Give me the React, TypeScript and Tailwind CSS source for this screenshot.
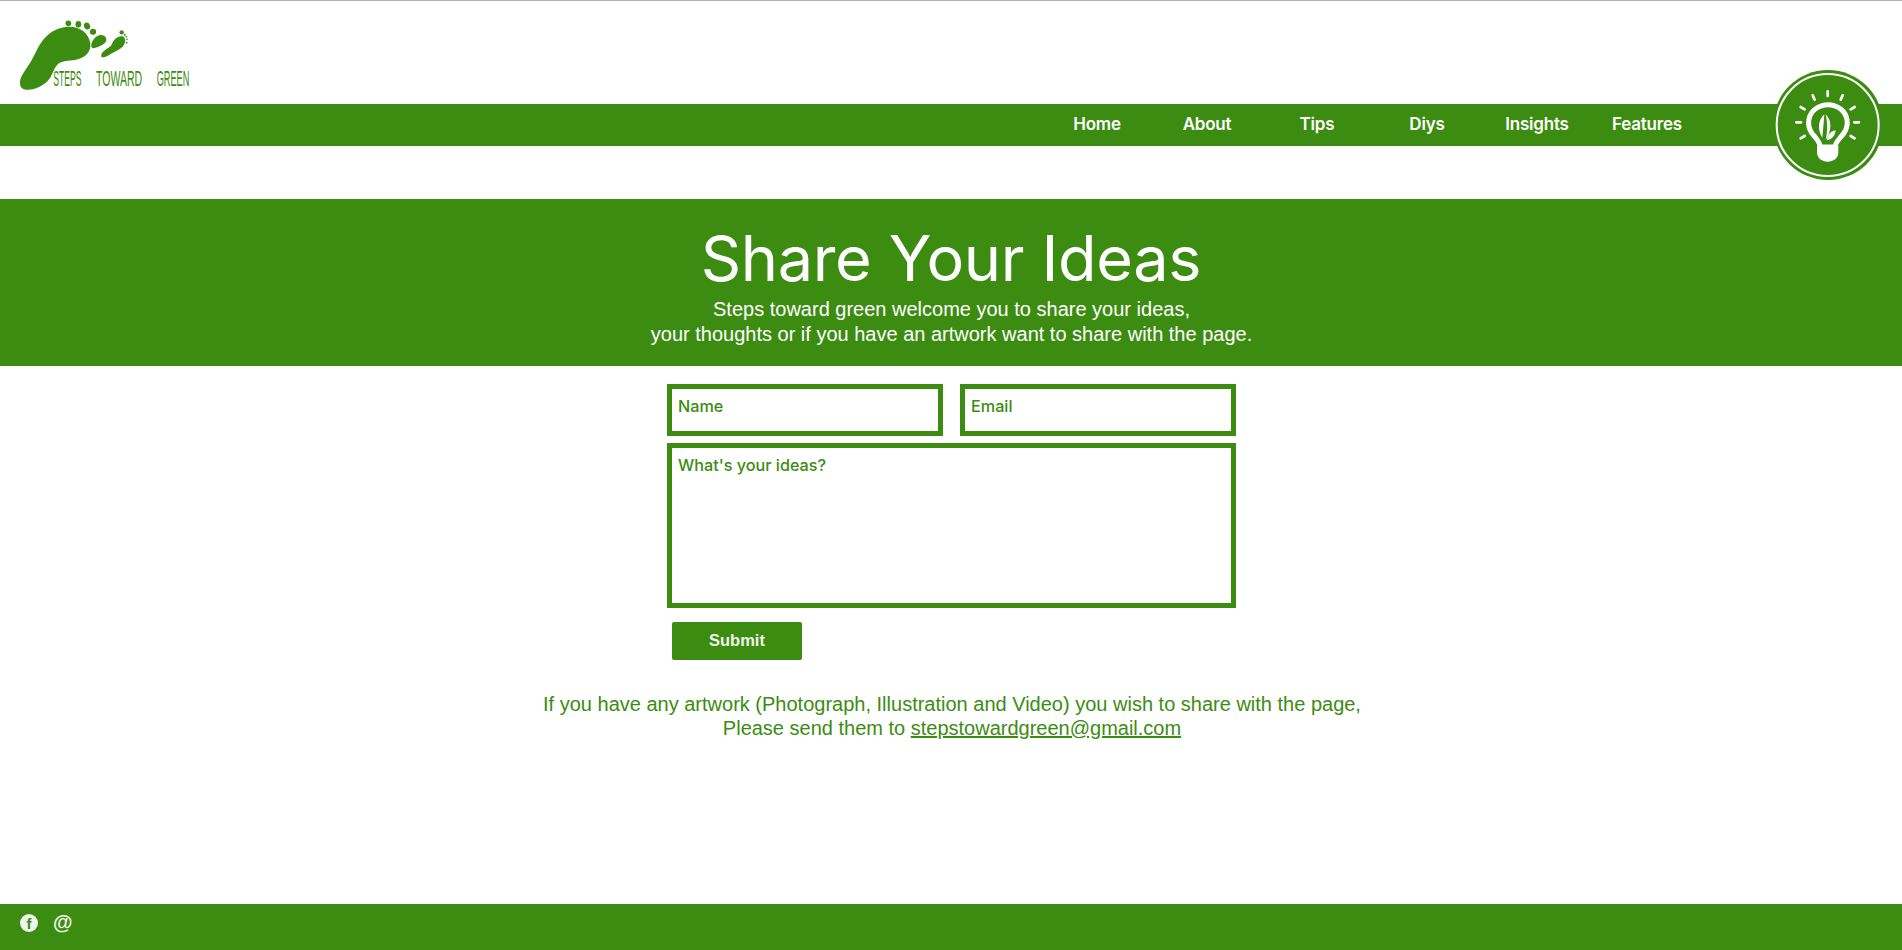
const navItems = ["Home", "About", "Tips", "Diys", "Insights", "Features"];

function Logo() {
  return (
    <svg className="block w-[220px] h-[103px]" viewBox="0 3 660 309" fill="#3c8c11">
      <path d="M60 250C58 234 72 216 88 192C104 168 114 136 134 114C150 96 176 80 208 80C242 80 266 100 271 130C274 156 256 174 228 179C204 183 182 182 172 194C160 206 158 228 142 244C124 262 98 271 78 269C66 268 61 262 60 250Z" />
      <circle cx="205" cy="70" r="8.5" />
      <ellipse cx="235" cy="73" rx="8.5" ry="10" />
      <ellipse cx="261" cy="78" rx="9" ry="10.5" transform="rotate(-25 261 78)" />
      <ellipse cx="279" cy="95" rx="9.5" ry="9" />
      <path d="M274 134C276 120 288 106 302 105C314 104 322 114 318 124C312 136 296 140 284 144C276 146 273 142 274 134Z" />
      <path d="M304 166C304 154 322 148 334 136C340 118 354 106 368 109C378 114 378 130 368 140C358 150 348 152 336 160C324 168 312 174 307 172C304 171 303 169 304 166Z" />
      <circle cx="365" cy="97" r="6.5" />
      <circle cx="374" cy="104" r="3" />
      <circle cx="379" cy="110" r="2.5" />
      <circle cx="381" cy="118" r="2.5" />
      <circle cx="380" cy="128" r="2.5" />
      <g className="font-['Liberation_Sans',sans-serif]" fontSize="68">
        <text transform="translate(160 258) scale(0.38 1)">STEPS</text>
        <text transform="translate(288 258) scale(0.464 1)">TOWARD</text>
        <text transform="translate(470 258) scale(0.405 1)">GREEN</text>
      </g>
    </svg>
  );
}

function BulbBadge() {
  return (
    <div className="absolute left-[1773px] top-[69px] w-[110px] h-[110px] rounded-full bg-[#3c8c11] flex items-center justify-center">
      <svg className="w-[110px] h-[110px]" viewBox="100 57 330 330">
        <circle cx="264" cy="222" r="153" fill="none" stroke="#fff" strokeWidth="6" />
        <g fill="none" stroke="#fff" strokeWidth="8" strokeLinecap="round">
          <path d="M264 121V135M219 133L225 146M309 133L303 146M183 168L195 175M345 168L333 175M170 214H184M344 214H358M183 262L195 255M345 262L333 255" />
          <path d="M242 288C240 270 226 260 215 244C201 222 205 190 227 174C250 157 280 157 303 174C325 192 329 222 313 246C302 262 288 270 286 288Z" strokeWidth="15" />
        </g>
        <path d="M232 284H296V304C296 320 284 332 264 332C244 332 232 320 232 304Z" fill="#fff" />
        <path d="M254 190C236 206 232 236 248 260C250 240 252 216 254 190ZM258 190C276 208 278 236 258 268C264 240 264 216 258 190Z" fill="#fff" />
        <path d="M262 268C262 252 272 242 288 238C286 254 278 264 262 268Z" fill="#fff" />
      </svg>
    </div>
  );
}

export default function App() {
  return (
    <div className="relative flex flex-col min-h-[950px] bg-white border-t border-[#b5b5b5] font-['Liberation_Sans',sans-serif] text-[#3c8c11]">
      <header>
        <Logo />
        <nav className="h-[42px] bg-[#3c8c11] flex justify-end pr-[200px]">
          {navItems.map((item) => (
            <a key={item} className="w-[110px] text-center text-white font-['Inter',sans-serif] font-semibold text-[17px] leading-[40px] tracking-[-0.2px]">
              {item}
            </a>
          ))}
        </nav>
      </header>
      <BulbBadge />

      <section className="mt-[53px] h-[167px] bg-[#3c8c11] text-white text-center">
        <h1 className="font-['Inter',sans-serif] font-normal text-[63px] leading-[76px] pt-[21px] tracking-[-0.35px]">Share Your Ideas</h1>
        <p className="text-[20px] leading-[25px] mt-[1px] pl-[1px]">
          Steps toward green welcome you to share your ideas,
          <br />
          your thoughts or if you have an artwork want to share with the page.
        </p>
      </section>

      <form className="w-[569px] ml-[667px] mt-[18px] flex flex-col">
        <div className="flex gap-[17px]">
          <div className="w-[276px] h-[52px] border-[5px] border-[#3c8c11] pl-[6px] pt-[7px] font-['Inter',sans-serif] font-medium text-[16.2px] leading-[20px]">Name</div>
          <div className="w-[276px] h-[52px] border-[5px] border-[#3c8c11] pl-[6px] pt-[7px] font-['Inter',sans-serif] font-medium text-[16.2px] leading-[20px]">Email</div>
        </div>
        <div className="mt-[7px] h-[165px] border-[5px] border-[#3c8c11] pl-[6px] pt-[7px] font-['Inter',sans-serif] font-medium text-[16.2px] leading-[20px]">What's your ideas?</div>
        <button type="button" className="mt-[14px] ml-[5px] w-[130px] h-[38px] pb-[2px] rounded-[2px] bg-[#3c8c11] text-[#eef5ea] font-bold text-[16.5px]">Submit</button>
      </form>

      <p className="mt-[32px] pl-[2px] text-center text-[20px] leading-[24px]">
        If you have any artwork (Photograph, Illustration and Video) you wish to share with the page,
        <br />
        Please send them to <a className="underline">stepstowardgreen@gmail.com</a>
      </p>

      <footer className="mt-auto h-[46px] bg-[#3c8c11] flex items-start pl-[20px] pt-[9px] gap-[15px] text-[#eef5ea]">
        <svg className="w-[18px] h-[18px] mt-[1px]" viewBox="0 0 18 18">
          <circle cx="9" cy="9" r="9" fill="#eef5ea" />
          <text x="9" y="15" textAnchor="middle" fontSize="15" fontWeight="700" fill="#3c8c11">f</text>
        </svg>
        <span className="text-[20px] leading-[19px] font-semibold">@</span>
      </footer>
    </div>
  );
}
